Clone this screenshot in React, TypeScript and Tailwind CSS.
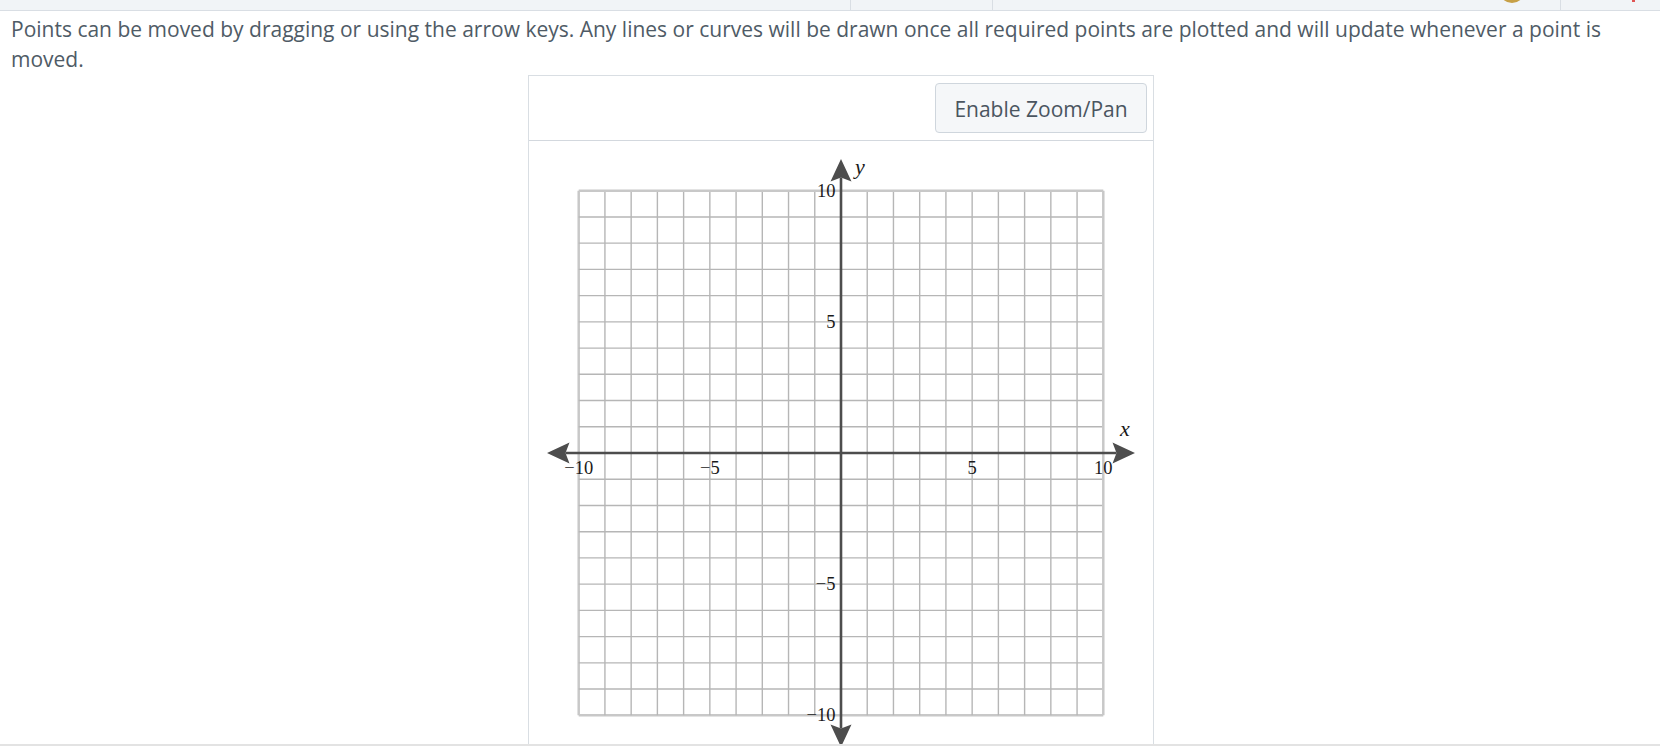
import React from 'react';

const UNIT = 26.23;
const C = 312;
const AXIS_LEN = 294;
const HEAD = 22.5;
const HALF = 10.5;
const NOTCH = 4;

const px = (v: number) => C + v * UNIT;
const py = (v: number) => C - v * UNIT;

const GridLines: React.FC = () => {
	const steps = Array.from({ length: 21 }, (_, i) => i - 10);
	return (
		<g>
			{steps.map((s) => {
				const edge = Math.abs(s) === 10;
				return (
					<g key={s}>
						<line
							x1={px(s)}
							x2={px(s)}
							y1={py(10)}
							y2={py(-10)}
							stroke={edge ? '#c8c8c8' : '#b6b6b6'}
							strokeWidth={edge ? 2.5 : 1.4}
						/>
						<line
							x1={px(-10)}
							x2={px(10)}
							y1={py(s)}
							y2={py(s)}
							stroke={edge ? '#c8c8c8' : '#b6b6b6'}
							strokeWidth={edge ? 2.5 : 1.4}
						/>
					</g>
				);
			})}
		</g>
	);
};

// arrow head pointing along +x, drawn at origin then rotated
const ArrowHead: React.FC<{ x: number; y: number; angle: number }> = ({ x, y, angle }) => (
	<path
		d={`M0 0 L${-HEAD} ${-HALF} L${-HEAD + NOTCH} 0 L${-HEAD} ${HALF} Z`}
		fill="#4d4d4d"
		transform={`translate(${x} ${y}) rotate(${angle})`}
	/>
);

const Axes: React.FC = () => {
	const inner = AXIS_LEN - HEAD + NOTCH;
	return (
		<g>
			<line x1={C - inner} x2={C + inner} y1={C} y2={C} stroke="#4d4d4d" strokeWidth={2.6} />
			<line x1={C} x2={C} y1={C - inner} y2={C + inner} stroke="#4d4d4d" strokeWidth={2.6} />
			<ArrowHead x={C + AXIS_LEN} y={C} angle={0} />
			<ArrowHead x={C - AXIS_LEN} y={C} angle={180} />
			<ArrowHead x={C} y={C - AXIS_LEN} angle={-90} />
			<ArrowHead x={C} y={C + AXIS_LEN} angle={90} />
		</g>
	);
};

const TickLabels: React.FC = () => {
	const ticks = [-10, -5, 5, 10];
	const label = (t: number) => (t < 0 ? `\u2212${Math.abs(t)}` : `${t}`);
	return (
		<g fill="#1a1a1a" fontSize={18.5} fontFamily='"Liberation Serif", "Times New Roman", serif'>
			{ticks.map((t) => (
				<text key={`x${t}`} x={px(t)} y={C + 21} textAnchor="middle">
					{label(t)}
				</text>
			))}
			{ticks.map((t) => (
				<text key={`y${t}`} x={C - 5.5} y={py(t) + 6} textAnchor="end">
					{label(t)}
				</text>
			))}
			<text x={591} y={295} fontSize={22} fontStyle="italic">
				x
			</text>
			<text x={326} y={33} fontSize={22} fontStyle="italic">
				y
			</text>
		</g>
	);
};

const Board: React.FC = () => (
	<svg width={624} height={624} viewBox="0 0 624 624" className="block">
		<GridLines />
		<Axes />
		<TickLabels />
	</svg>
);

export default function App() {
	return (
		<div className="h-[746px] flex flex-col overflow-hidden bg-white font-['Open_Sans',sans-serif]">
			<div className="flex h-[11px] shrink-0 overflow-hidden border-b border-[#d9dee4] bg-[#f1f4f7]">
				<div className="w-[850px] shrink-0" />
				<div className="w-[142px] shrink-0 border-l border-[#d9dee4]" />
				<div className="flex flex-1 items-end justify-end border-l border-[#d9dee4] pr-[35px]">
					<div className="mb-[7px] h-[26px] w-[26px] shrink-0 rounded-full bg-[#c7a046]" />
				</div>
				<div className="flex w-[100px] shrink-0 items-start border-l border-[#d9dee4] pl-[71px]">
					<div className="h-[2px] w-[3px] bg-[#e05454]" />
				</div>
			</div>

			<div className="flex-1 overflow-hidden pl-[11px] pr-[11px]">
				<p className="pt-[3px] text-[21px] leading-[30px] text-[#4f5b66]">
					Points can be moved by dragging or using the arrow keys. Any lines or curves will be drawn
					once all required points are plotted and will update whenever a point is moved.
				</p>

				<div className="ml-[517px] mt-[1px] w-[626px] border border-[#d9dee3] bg-white">
					<div className="flex justify-end border-b border-[#d3d8de] px-[6px] py-[7px]">
						<button
							type="button"
							className="h-[50px] w-[212px] rounded-[4px] border border-[#cfd6dd] bg-[#f5f7f9] pt-[3px] text-[21px] text-[#4a5560]"
						>
							Enable Zoom/Pan
						</button>
					</div>
					<Board />
				</div>
			</div>

			<div className="h-[2px] shrink-0 bg-[#e3e3e3]" />
		</div>
	);
}
